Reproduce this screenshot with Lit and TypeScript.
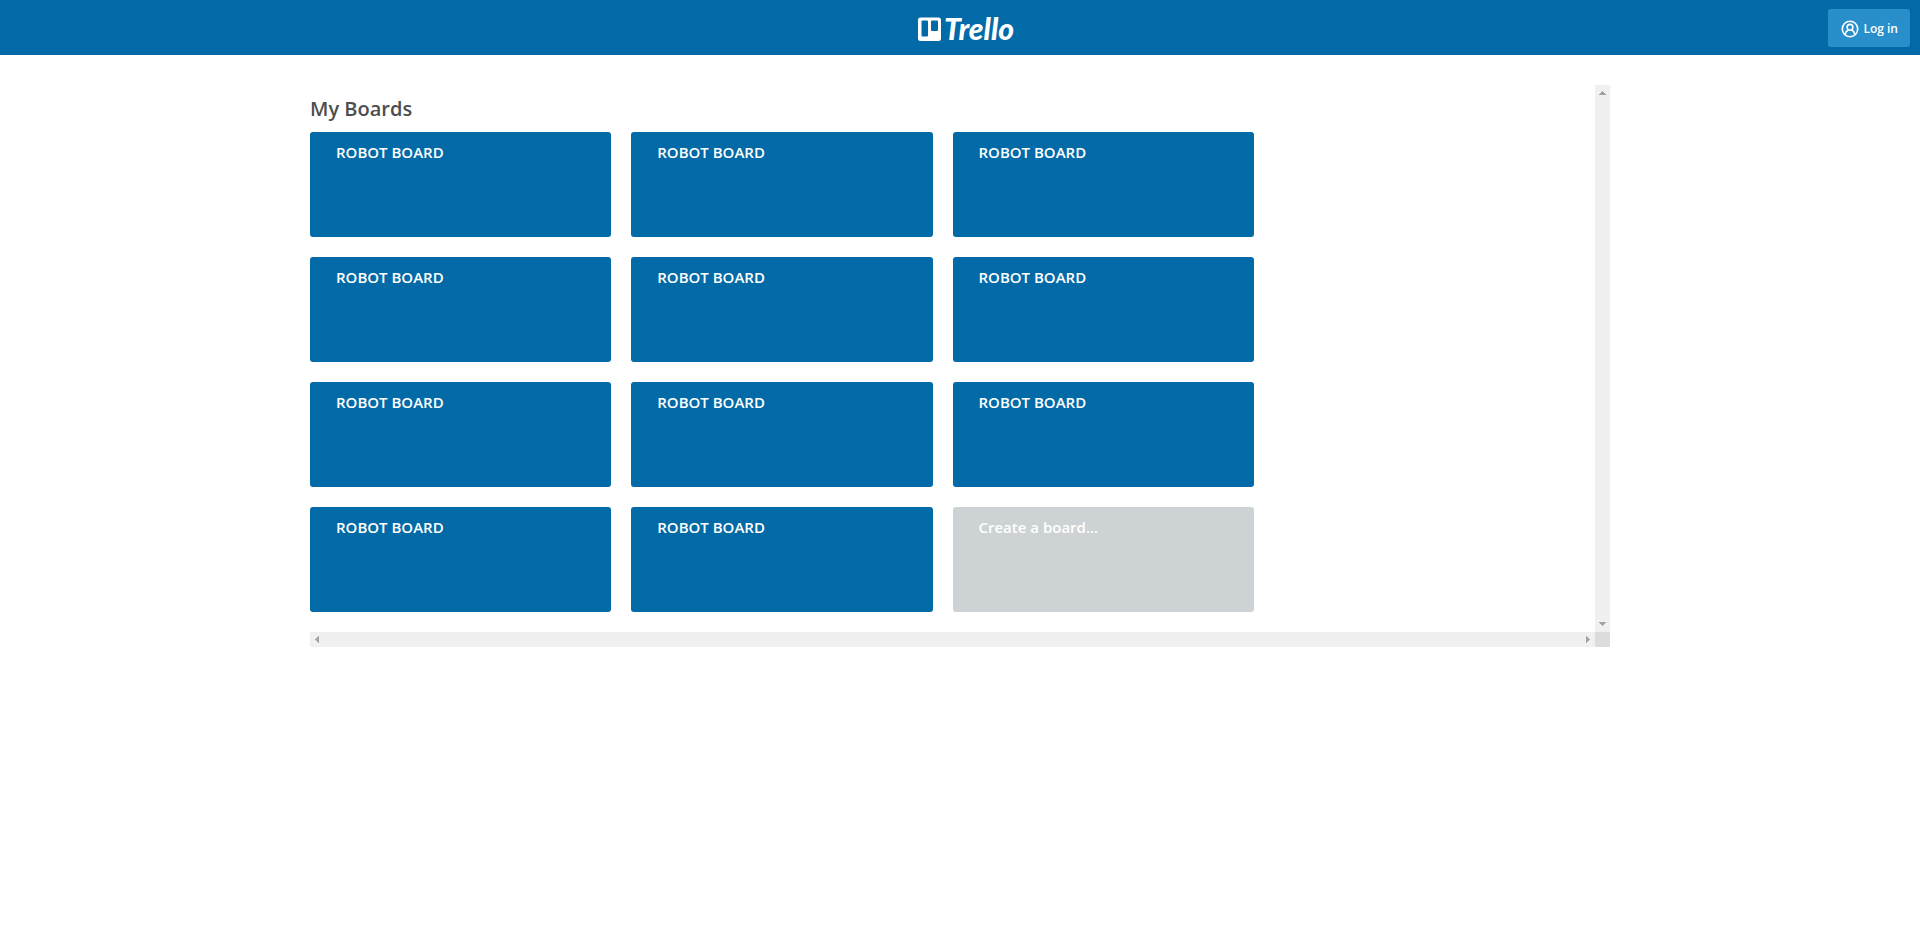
import { LitElement, html, css, svg } from "lit";
import { customElement, property } from "lit/decorators.js";

@customElement("board-tile")
class BoardTile extends LitElement {
  @property() label = "";
  @property({ type: Boolean, reflect: true }) create = false;

  static styles = css`
    :host {
      display: block;
    }
    .tile {
      display: flex;
      align-items: flex-start;
      box-sizing: border-box;
      width: 100%;
      min-height: 105px;
      padding: 10px 26px;
      border: 0;
      border-radius: 3px;
      background: #026aa7;
      color: #fff;
      font: 600 15px/20px "Open Sans", sans-serif;
      text-align: left;
      text-decoration: none;
      cursor: pointer;
    }
    .create {
      background: #cdd2d4;
    }
  `;

  render() {
    return this.create
      ? html`<button class="tile create" type="button">${this.label}</button>`
      : html`<a class="tile" href="#board">${this.label}</a>`;
  }
}

@customElement("app-root")
class AppRoot extends LitElement {
  private boards = Array.from({ length: 11 }, () => "ROBOT BOARD");

  static styles = css`
    :host {
      display: block;
      font-family: "Open Sans", sans-serif;
      color: #4d4d4d;
    }
    .header {
      display: grid;
      grid-template-columns: 1fr auto 1fr;
      align-items: center;
      box-sizing: border-box;
      height: 55px;
      padding: 1px 10px 0;
      background: #026aa7;
    }
    .logo {
      grid-column: 2;
      display: flex;
      color: #fff;
    }
    .wordmark {
      font: italic 900 30px "Lato", sans-serif;
    }
    .login {
      justify-self: end;
      display: flex;
      align-items: center;
      gap: 4px;
      box-sizing: border-box;
      height: 38px;
      padding: 2px 12px 0 13px;
      border: 0;
      border-radius: 3px;
      background: #298fca;
      color: #fff;
      font: 600 12px/18px "Open Sans", sans-serif;
      cursor: pointer;
    }
    .scroller {
      display: grid;
      grid-template-columns: 1fr 15px;
      max-width: 1300px;
      margin: 30px auto 0;
    }
    .content {
      padding: 10px 0 20px;
    }
    .title {
      margin: 0 0 9px;
      font-size: 20px;
      line-height: 28px;
      font-weight: 600;
    }
    .boards {
      display: grid;
      grid-template-columns: repeat(3, 1fr);
      gap: 20px;
      box-sizing: border-box;
      width: 75%;
      padding-right: 20px;
    }
    .bar {
      display: flex;
      justify-content: space-between;
      background: #f0f0f0;
    }
    .vertical {
      flex-direction: column;
    }
    .arrow {
      display: block;
      width: 15px;
      height: 15px;
      padding: 0;
      border: 0;
      background: none;
    }
    .arrow svg {
      display: block;
    }
    .corner {
      background: #dcdcdc;
    }
  `;

  private arrow(label: string, points: string) {
    return html`<button class="arrow" type="button" aria-label=${label}>
      <svg width="15" height="15" viewBox="0 0 15 15" shape-rendering="crispEdges">
        ${svg`<polygon points=${points} fill="#a3a3a3" />`}
      </svg>
    </button>`;
  }

  render() {
    return html`
      <header class="header">
        <a class="logo" href="#home" aria-label="Trello">
          <svg width="114" height="44" viewBox="-2 -6 114 44">
            <path
              fill="currentColor"
              fill-rule="evenodd"
              d="M15.500 5.500H33.500a2.500 2.500 0 0 1 2.500 2.500V26.500a2.500 2.500 0 0 1-2.500 2.500H15.500A2.500 2.500 0 0 1 13 26.500V8A2.500 2.500 0 0 1 15.500 5.500ZM17.500 8.500a1 1 0 0 0-1 1V23.500a1 1 0 0 0 1 1H22a1 1 0 0 0 1-1V9.500a1 1 0 0 0-1-1ZM27 8.500a1 1 0 0 0-1 1V18a1 1 0 0 0 1 1H32a1 1 0 0 0 1-1V9.500a1 1 0 0 0-1-1Z"
            />
            <text class="wordmark" x="39" y="28" fill="currentColor">Trello</text>
          </svg>
        </a>
        <button class="login" type="button">
          <svg width="18" height="18" viewBox="0 0 18 18" fill="none" stroke="currentColor" stroke-width="1.6">
            <circle cx="9" cy="9" r="7.700" />
            <circle cx="9" cy="7.300" r="2.900" />
            <path d="M4 14.500C4.500 11.800 6 10.600 7.500 9.800M14 14.500C13.500 11.800 12 10.600 10.500 9.800" />
          </svg>
          <span>Log in</span>
        </button>
      </header>
      <main class="scroller">
        <section class="content">
          <h1 class="title">My Boards</h1>
          <div class="boards">
            ${this.boards.map((b) => html`<board-tile label=${b}></board-tile>`)}
            <board-tile create label="Create a board..."></board-tile>
          </div>
        </section>
        <div class="bar vertical">
          ${this.arrow("Scroll up", "4,10 11,10 7.500,6")}
          ${this.arrow("Scroll down", "4,5 11,5 7.500,9")}
        </div>
        <div class="bar">
          ${this.arrow("Scroll left", "9,4 9,11 5,7.500")}
          ${this.arrow("Scroll right", "6,4 6,11 10,7.500")}
        </div>
        <div class="corner"></div>
      </main>
    `;
  }
}
